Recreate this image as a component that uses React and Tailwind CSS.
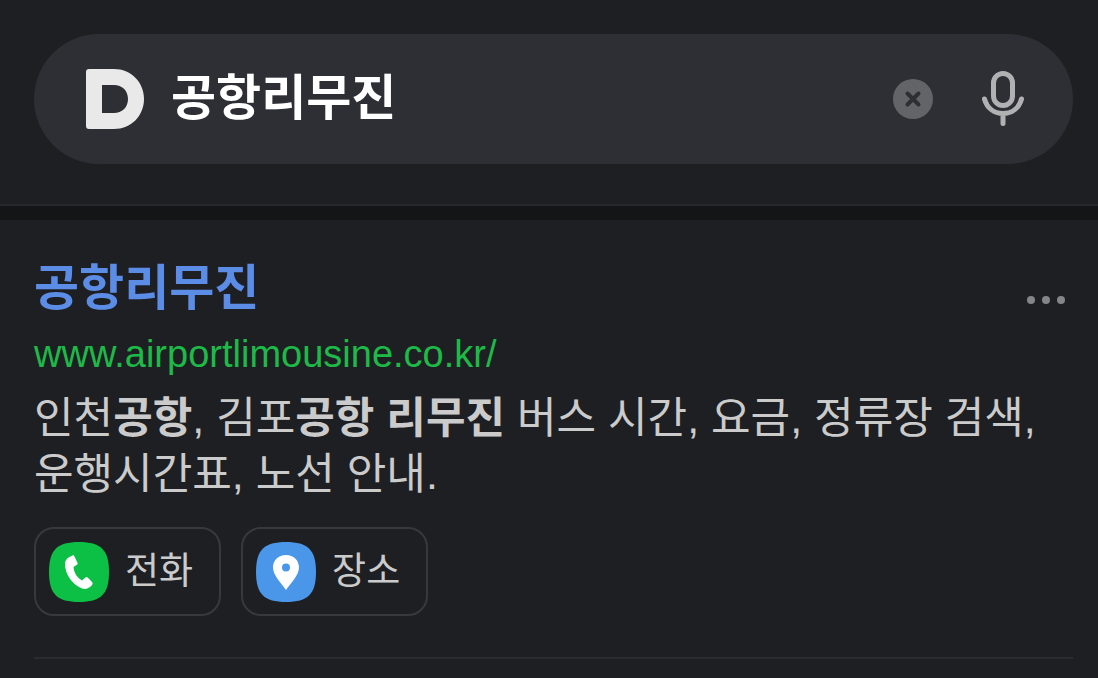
import React, { useState } from 'react';

function DaumLogo() {
  return (
    <svg width="60" height="60" viewBox="0 0 60 60" aria-hidden="true" className="shrink-0">
      <path
        fill="#e9e9e9"
        fillRule="evenodd"
        d="M4 0H29C46 0 59 13 59 30S46 60 29 60H4Q1 60 1 57V3Q1 0 4 0ZM17 16V44H29C37 44 43 38.500 43 30S37 16 29 16Z"
      />
    </svg>
  );
}

function SearchBar() {
  const [query, setQuery] = useState('공항리무진');

  return (
    <form
      role="search"
      onSubmit={(e) => e.preventDefault()}
      className="flex items-center h-[130px] rounded-full bg-[#2e2f34] pl-[51px] pr-12"
    >
      <a href="/" aria-label="Daum">
        <DaumLogo />
      </a>
      <input
        type="text"
        aria-label="검색어"
        value={query}
        onChange={(e) => setQuery(e.target.value)}
        className="flex-1 min-w-0 ml-[26px] h-20 pb-3 bg-transparent outline-none text-white text-[49px] font-bold"
      />
      <button type="button" aria-label="지우기" onClick={() => setQuery('')} className="mr-12">
        <svg width="40" height="40" viewBox="0 0 40 40">
          <circle cx="20" cy="20" r="20" fill="#636468" />
          <path d="M14.500 14.500L25.500 25.500M25.500 14.500L14.500 25.500" stroke="#2e2f34" strokeWidth="4" strokeLinecap="round" />
        </svg>
      </button>
      <button type="button" aria-label="음성 검색">
        <svg width="44" height="56" viewBox="0 0 44 56" fill="none" stroke="#b1b1b3" strokeWidth="5" strokeLinecap="round">
          <rect x="12.500" y="2.500" width="19" height="32" rx="9.500" />
          <path d="M3.500 28C6 37 13 42.500 22 42.500S38 37 40.500 28M22 43V52.500" />
        </svg>
      </button>
    </form>
  );
}

function QuickButton({ label, children }) {
  return (
    <button
      type="button"
      className="flex items-center gap-4 h-[89px] pl-[13px] pr-[26px] rounded-[20px] border-2 border-[#38393d] text-[#cbcbcb] text-[37px]"
    >
      <svg width="60" height="60" viewBox="0 0 60 60" aria-hidden="true">
        {children}
      </svg>
      <span>{label}</span>
    </button>
  );
}

const TILE = 'M30 0C52 0 60 8 60 30S52 60 30 60S0 52 0 30S8 0 30 0Z';

export default function App() {
  return (
    <div className="min-h-screen bg-[#1e1f23] font-['Liberation_Sans','Noto_Sans_CJK_KR',sans-serif]">
      <header className="pt-[34px] pb-10 pl-[34px] pr-[25px] border-b-2 border-[#27282c]">
        <SearchBar />
      </header>
      <div className="h-[14px] bg-[#141517]" />

      <main className="pl-[34px] pr-[25px]">
        <article className="pt-9 pb-[41px] border-b-2 border-[#2b2c30]">
          <div className="flex items-center justify-between">
            <h2 className="text-[49px] leading-[64px] font-bold">
              <a href="http://www.airportlimousine.co.kr/" className="text-[#5c8de6]">공항리무진</a>
            </h2>
            <button type="button" aria-label="더보기" className="mr-2 mt-6">
              <svg width="38" height="8" viewBox="0 0 38 8" fill="#858587">
                <circle cx="4" cy="4" r="4" />
                <circle cx="19" cy="4" r="4" />
                <circle cx="34" cy="4" r="4" />
              </svg>
            </button>
          </div>

          <a
            href="http://www.airportlimousine.co.kr/"
            className="block mt-2 text-[38px] leading-[52px] text-[#1dba48]"
          >
            www.airportlimousine.co.kr/
          </a>

          <p className="mt-[10px] text-[43px] leading-[56px] break-keep text-[#cbcbcb]">
            인천<b>공항</b>, 김포<b>공항</b> <b>리무진</b> 버스 시간, 요금, 정류장 검색, 운행시간표, 노선 안내.
          </p>

          <div className="flex gap-5 mt-[25px]">
            <QuickButton label="전화">
              <path d={TILE} fill="#0cc046" />
              <path
                fill="#fff"
                d="M23.500 13.500C24.500 13 25 13.500 25.500 14.500L28.500 21C29 22 28.500 22.500 27.500 23L24.500 25C25 31 28 35.500 33 38.500L36.500 35.500C37.500 34.700 38 35 38.700 35.500L43 40C43.800 41 43.800 42 43 43C40 46.500 36 48 32 46C23 42 16 32 16 22C16 18 19 15 23.500 13.500Z"
              />
            </QuickButton>
            <QuickButton label="장소">
              <path d={TILE} fill="#4a97e9" />
              <path
                fill="#fff"
                fillRule="evenodd"
                d="M30 13C37.500 13 43 18 43 25.500C43 33 35 41 30 48C25 41 17 33 17 25.500C17 18 22.500 13 30 13ZM30 21.500A4 4 0 1 0 30 29.500A4 4 0 1 0 30 21.500Z"
              />
            </QuickButton>
          </div>
        </article>
      </main>
    </div>
  );
}
